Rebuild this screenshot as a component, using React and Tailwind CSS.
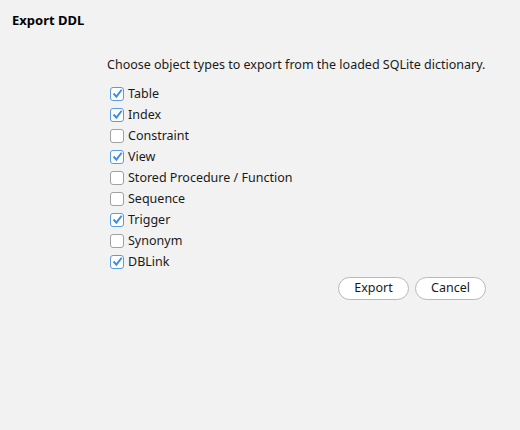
import React, { useState } from 'react';

const items = [
  { label: 'Table', checked: true },
  { label: 'Index', checked: true },
  { label: 'Constraint', checked: false },
  { label: 'View', checked: true },
  { label: 'Stored Procedure / Function', checked: false },
  { label: 'Sequence', checked: false },
  { label: 'Trigger', checked: true },
  { label: 'Synonym', checked: false },
  { label: 'DBLink', checked: true },
];

function Box({ checked }) {
  return (
    <span
      className={`flex h-[14px] w-[14px] items-center justify-center rounded-[3px] border bg-white ${
        checked ? 'border-[#5b9be0]' : 'border-[#a0a0a0]'
      }`}
    >
      {checked && (
        <svg width="11" height="11" viewBox="0 0 10 10">
          <path d="M1.4 5 L4 7.9 L8.8 1.6" fill="none" stroke="#3d8fe0" strokeWidth="1.8" />
        </svg>
      )}
    </span>
  );
}

export default function App() {
  const [state, setState] = useState(items.map((i) => i.checked));

  return (
    <div className="h-[430px] w-[520px] bg-[#f2f2f2] text-[12.5px] text-[#1a1a1a]" style={{ fontFamily: '"Noto Sans", "Open Sans", sans-serif' }}>
      {/* Header */}
      <div className="px-3 pt-[10px] text-[13px] font-bold leading-5 text-black">Export DDL</div>

      <div className="ml-[107px] mt-[26px] w-[386px]">
        <p className="whitespace-nowrap leading-[18px]">Choose object types to export from the loaded SQLite dictionary.</p>

        <div className="mt-[9px] flex flex-col pl-[3px]">
          {items.map((item, i) => (
            <label
              key={item.label}
              className="flex h-[21px] cursor-default items-center gap-[4px] whitespace-nowrap"
              onClick={() => setState((s) => s.map((v, j) => (j === i ? !v : v)))}
            >
              <Box checked={state[i]} />
              <span className="leading-[18px]">{item.label}</span>
            </label>
          ))}
        </div>

        <div className="mt-[5px] flex justify-end gap-[6px] pr-[7px]">
          <button className="h-[23px] w-[71px] rounded-full border border-[#b8b8b8] bg-white text-[12.5px] leading-none text-[#1a1a1a]">
            Export
          </button>
          <button className="h-[23px] w-[71px] rounded-full border border-[#b8b8b8] bg-white text-[12.5px] leading-none text-[#1a1a1a]">
            Cancel
          </button>
        </div>
      </div>
    </div>
  );
}
